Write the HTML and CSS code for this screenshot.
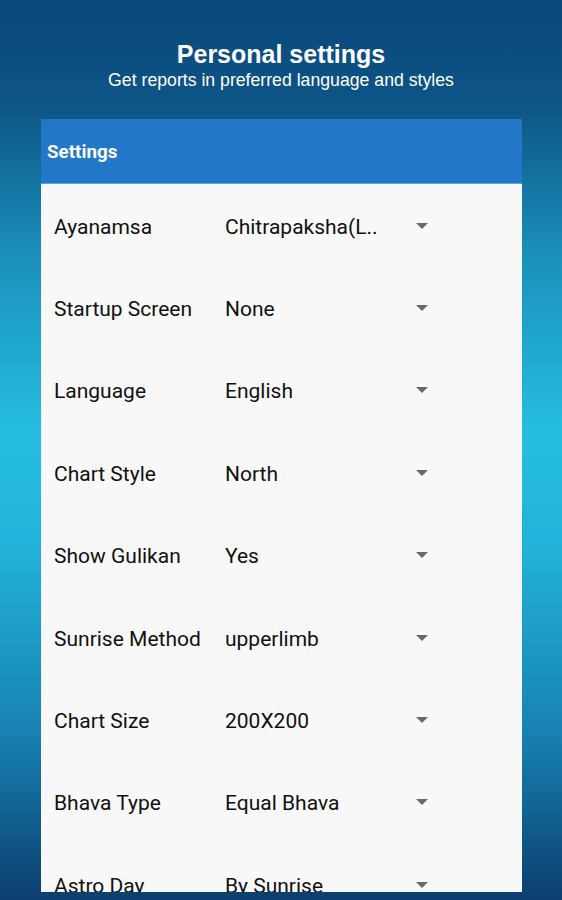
FILE: index.html
```html
<!DOCTYPE html>
<html>
<head>
  <title>Personal settings</title>
  <link rel="stylesheet" href="styles.css">
</head>
<body>
  <div class="intro">
    <h1>Personal settings</h1>
    <p>Get reports in preferred language and styles</p>
  </div>
  <div class="card">
    <div class="card-head">Settings</div>
    <div class="row"><span class="label">Ayanamsa</span><span class="value">Chitrapaksha(L..</span><span class="arrow"></span></div>
    <div class="row"><span class="label">Startup Screen</span><span class="value">None</span><span class="arrow"></span></div>
    <div class="row"><span class="label">Language</span><span class="value">English</span><span class="arrow"></span></div>
    <div class="row"><span class="label">Chart Style</span><span class="value">North</span><span class="arrow"></span></div>
    <div class="row"><span class="label">Show Gulikan</span><span class="value">Yes</span><span class="arrow"></span></div>
    <div class="row"><span class="label">Sunrise Method</span><span class="value">upperlimb</span><span class="arrow"></span></div>
    <div class="row"><span class="label">Chart Size</span><span class="value">200X200</span><span class="arrow"></span></div>
    <div class="row"><span class="label">Bhava Type</span><span class="value">Equal Bhava</span><span class="arrow"></span></div>
    <div class="row"><span class="label">Astro Day</span><span class="value">By Sunrise</span><span class="arrow"></span></div>
  </div>
</body>
</html>
```
FILE: styles.css
```css
html, body {
  height: 100%;
}
body {
  margin: 0;
  overflow: hidden;
  font-family: Roboto, sans-serif;
  background: linear-gradient(to bottom, #0a467a 0%, #0d5687 12%, #1a8fba 28%, #26bee0 48%, #22b4da 60%, #1780b0 82%, #0b3e6e 100%);
}
.intro {
  height: 119px;
  padding-top: 40px;
  box-sizing: border-box;
  text-align: center;
  color: #fff;
  font-family: "Liberation Sans", Arial, sans-serif;
}
.intro h1 {
  margin: 0;
  font-size: 25px;
  line-height: 28px;
  font-weight: bold;
}
.intro p {
  margin: 0;
  font-size: 19px;
  line-height: 24px;
  transform: scaleX(0.93);
}
.card {
  margin: 0 40px 0 41px;
  height: 773px;
  overflow: hidden;
  background: #f8f8f8;
}
.card-head {
  height: 65px;
  padding: 2px 0 0 6px;
  display: flex;
  align-items: center;
  background: #2277c9;
  border-bottom: 1px solid #5fa0dc;
  box-sizing: border-box;
  color: #fff;
  font-size: 18.8px;
  font-weight: bold;
}
.row {
  height: 82.4px;
  display: flex;
  align-items: center;
  padding: 3px 0 0 13px;
  box-sizing: border-box;
  color: #111;
  font-size: 21px;
}
.label {
  width: 171px;
}
.value {
  width: 191px;
  white-space: nowrap;
}
.arrow {
  width: 0;
  height: 0;
  border-left: 6px solid transparent;
  border-right: 6px solid transparent;
  border-top: 6px solid #6a6a6a;
  margin-top: -2px;
}
```
